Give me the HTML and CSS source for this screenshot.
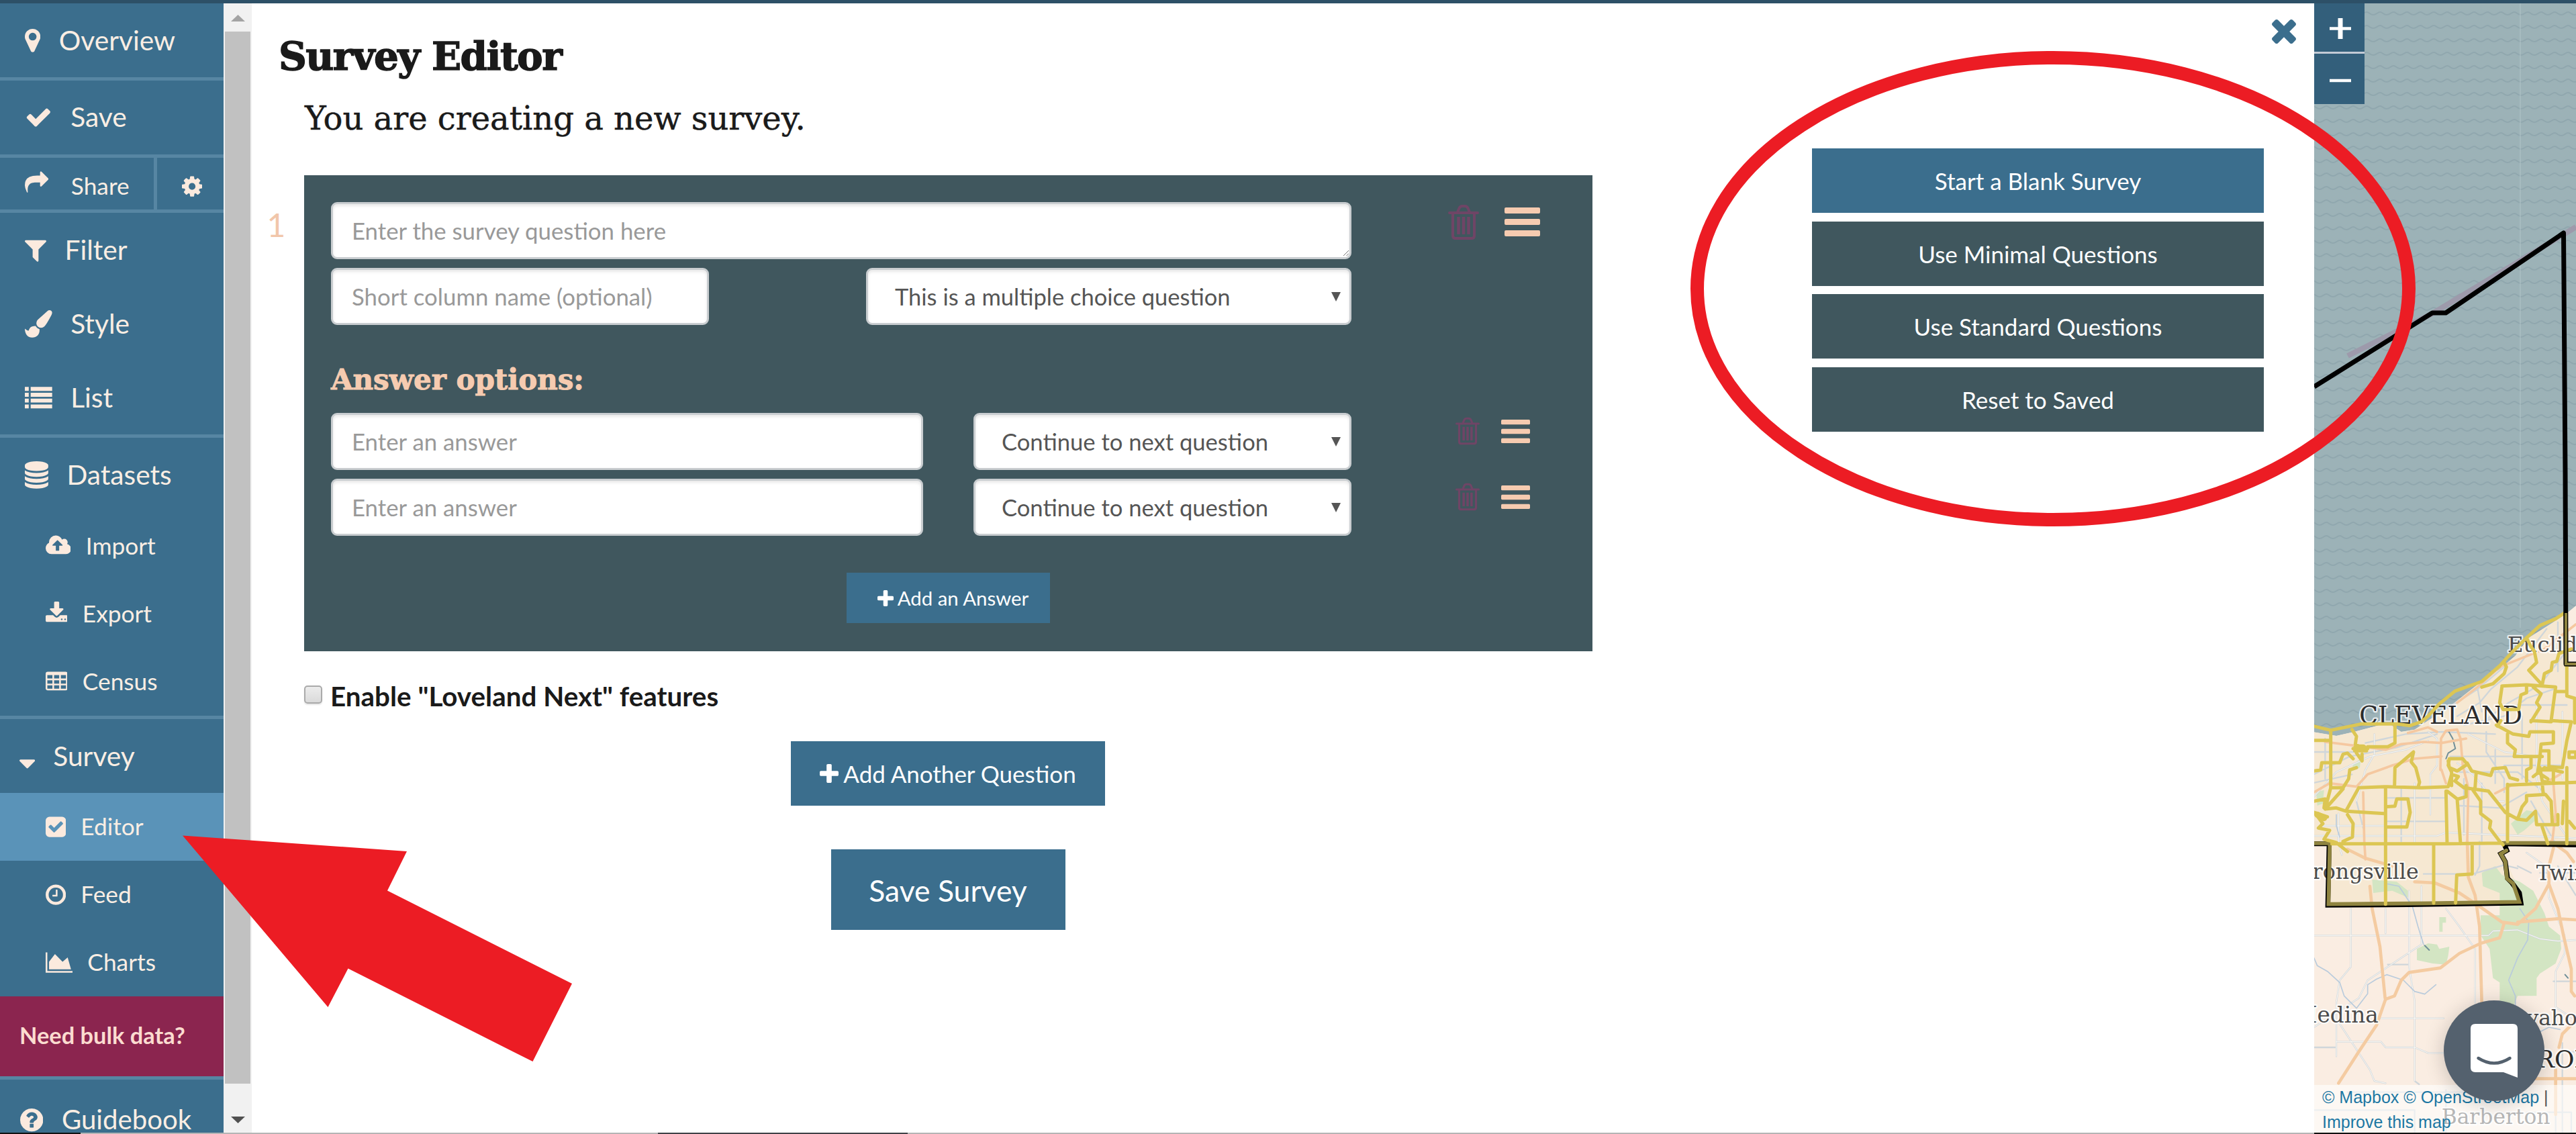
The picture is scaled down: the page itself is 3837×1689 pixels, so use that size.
FILE: index.html
```html
<!DOCTYPE html>
<html lang="en">
<head>
<meta charset="utf-8">
<title>Survey Editor</title>
<link rel="stylesheet" href="styles.css">
</head>
<body>
<svg class="defs" aria-hidden="true">
  <symbol id="i-trash" viewBox="0 0 46 52"><g fill="none" stroke="#6f4566" stroke-width="4"><path d="M2 12H44" stroke-linecap="round"/><path d="M14 11L16.500 5Q18 2 21 2H25Q28 2 29.500 5L32 11"/><path d="M7 12V46Q7 50 11 50H35Q39 50 39 46V12"/><path d="M15.500 18V44M23 18V44M30.500 18V44" stroke-width="4.500"/></g></symbol>
  <symbol id="i-bars" viewBox="0 0 53 43"><rect width="53" height="9" rx="2"/><rect y="17" width="53" height="9" rx="2"/><rect y="34" width="53" height="9" rx="2"/></symbol>
  <symbol id="i-plus" viewBox="192 128 1408 1408"><path d="M1600 736v192q0 40-28 68t-68 28h-416v416q0 40-28 68t-68 28h-192q-40 0-68-28t-28-68v-416h-416q-40 0-68-28t-28-68v-192q0-40 28-68t68-28h416v-416q0-40 28-68t68-28h192q40 0 68 28t28 68v416h416q40 0 68 28t28 68z"/></symbol>
  <symbol id="i-arrow" viewBox="0 0 14 14"><path d="M0 0h14L7 14z"/></symbol>
</svg>
<div class="app">
  <header class="topbar"></header>
  <nav class="sidebar">
    <a class="item"><svg viewBox="384 0 1024 1792"><path d="M1152 640q0-106-75-181t-181-75-181 75-75 181 75 181 181 75 181-75 75-181zm256 0q0 109-33 179l-364 774q-16 33-47.5 52t-67.5 19-67.5-19-46.5-52l-365-774q-33-70-33-179 0-212 150-362t362-150 362 150 150 362z"/></svg><span>Overview</span></a>
    <a class="item ruled save"><svg viewBox="0 0 1792 1792"><path d="M1671 566q0 40-28 68l-724 724-136 136q-28 28-68 28t-68-28l-136-136-362-362q-28-28-28-68t28-68l136-136q28-28 68-28t68 28l294 295 656-657q28-28 68-28t68 28l136 136q28 28 28 68z"/></svg><span>Save</span></a>
    <div class="share-row ruled">
      <a class="share"><svg viewBox="0 0 1792 1792"><path d="M1792 640q0 26-19 45l-512 512q-19 19-45 19t-45-19-19-45v-256h-224q-98 0-175.5 6t-154 21.5-133 42.5-105.5 69.5-80 101-48.5 138.5-17.5 181q0 55 5 123 0 6 2.5 23.5t2.5 26.5q0 15-8.5 25t-23.5 10q-16 0-28-17-7-9-13-22t-13.5-30-10.5-24q-127-285-127-451 0-199 53-333 162-403 875-403h224v-256q0-26 19-45t45-19 45 19l512 512q19 19 19 45z"/></svg><span>Share</span></a>
      <a class="gear"><svg viewBox="128 0 1536 1792"><path d="M1152 896q0-106-75-181t-181-75-181 75-75 181 75 181 181 75 181-75 75-181zm512-109v222q0 12-8 23t-20 13l-185 28q-19 54-39 91 35 50 107 138 10 12 10 25t-9 23q-27 37-99 108t-94 71q-12 0-26-9l-138-108q-44 23-91 38-16 136-29 186-7 28-36 28h-222q-14 0-24.5-8.5t-11.5-21.5l-28-184q-49-16-90-37l-141 107q-10 9-25 9-14 0-25-11-126-114-165-168-7-10-7-23 0-12 8-23 15-21 51-66.5t54-70.5q-27-50-41-99l-183-27q-13-2-21-12.5t-8-23.5v-222q0-12 8-23t19-13l186-28q14-46 39-92-40-57-107-138-10-12-10-24 0-10 9-23 26-36 98.5-107.5t94.5-71.5q13 0 26 10l138 107q44-23 91-38 16-136 29-186 7-28 36-28h222q14 0 24.5 8.5t11.5 21.5l28 184q49 16 90 37l142-107q9-9 24-9 13 0 25 10 129 119 165 170 7 8 7 22 0 12-8 23-15 21-51 66.5t-54 70.5q26 50 41 98l183 28q13 2 21 12.5t8 23.5z"/></svg></a>
    </div>
    <a class="item ruled filter"><svg viewBox="192 0 1408 1792"><path d="M1595 295q17 41-14 70l-493 493v742q0 42-39 59-13 5-25 5-27 0-45-19l-256-256q-19-19-19-45v-486l-493-493q-31-29-14-70 17-39 59-39h1280q42 0 59 39z"/></svg><span>Filter</span></a>
    <a class="item"><svg viewBox="0 0 1792 1792"><path d="M1615 0q70 0 122.5 46.5t52.5 116.5q0 63-45 151-332 629-465 752-97 91-218 91-126 0-216.5-92.5t-90.5-219.5q0-128 92-212l638-579q59-54 130-54zm-909 1034q39 76 106.5 130t150.5 76l1 71q4 213-129.5 347t-348.5 134q-123 0-218-46.5t-152.5-127.5-86.5-183-29-220q7 5 41 30t62 44.5 59 36.5 46 17q41 0 55-37 25-66 57.5-112.5t69.5-76 88-47.5 103-25.5 125-10.5z"/></svg><span>Style</span></a>
    <a class="item"><svg viewBox="0 0 1792 1792"><path d="M0 192h256v256H0zM384 192h1408v256H384zM0 576h256v256H0zM384 576h1408v256H384zM0 960h256v256H0zM384 960h1408v256H384zM0 1344h256v256H0zM384 1344h1408v256H384z"/></svg><span>List</span></a>
    <a class="item ruled"><svg viewBox="128 0 1536 1792"><path d="M896 768q237 0 443-43t325-127v170q0 69-103 128t-280 93.5-385 34.5-385-34.5-280-93.5-103-128v-170q119 84 325 127t443 43zm0 768q237 0 443-43t325-127v170q0 69-103 128t-280 93.5-385 34.5-385-34.5-280-93.5-103-128v-170q119 84 325 127t443 43zm0-384q237 0 443-43t325-127v170q0 69-103 128t-280 93.5-385 34.5-385-34.5-280-93.5-103-128v-170q119 84 325 127t443 43zm0-1152q208 0 385 34.5t280 93.5 103 128v128q0 69-103 128t-280 93.5-385 34.5-385-34.5-280-93.5-103-128v-128q0-69 103-128t280-93.5 385-34.5z"/></svg><span>Datasets</span></a>
    <a class="sub"><svg viewBox="0 0 1920 1792"><path d="M1280 864q0-14-9-23l-352-352q-9-9-23-9t-23 9l-351 351q-10 12-10 24 0 14 9 23t23 9h224v352q0 13 9.5 22.5t22.5 9.5h192q13 0 22.5-9.5t9.5-22.5v-352h224q13 0 22.5-9.5t9.5-22.5zm640 288q0 159-112.5 271.5t-271.5 112.5h-1088q-185 0-316.5-131.5t-131.5-316.5q0-130 70-240t188-165q-2-30-2-43 0-212 150-362t362-150q156 0 285.5 87t188.5 231q71-62 166-62 106 0 181 75t75 181q0 76-41 138 130 31 213.5 135.5t83.5 238.5z"/></svg><span>Import</span></a>
    <a class="sub"><svg viewBox="64 0 1664 1792"><path d="M1344 1344q0-26-19-45t-45-19-45 19-19 45 19 45 45 19 45-19 19-45zm256 0q0-26-19-45t-45-19-45 19-19 45 19 45 45 19 45-19 19-45zm128-224v320q0 40-28 68t-68 28h-1472q-40 0-68-28t-28-68v-320q0-40 28-68t68-28h465l135 136q58 56 136 56t136-56l136-136h464q40 0 68 28t28 68zm-325-569q17 41-14 70l-448 448q-18 19-45 19t-45-19l-448-448q-31-29-14-70 17-39 59-39h256v-448q0-26 19-45t45-19h256q26 0 45 19t19 45v448h256q42 0 59 39z"/></svg><span>Export</span></a>
    <a class="sub"><svg viewBox="0 0 1664 1792"><path fill-rule="evenodd" d="M160 128h1344q160 0 160 160v1088q0 160-160 160H160Q0 1536 0 1376V288Q0 128 160 128zM128 384v256h384V384zM640 384v256h384V384zM1152 384v256h384V384zM128 768v256h384V768zM640 768v256h384V768zM1152 768v256h384V768zM128 1152v256h384v-256zM640 1152v256h384v-256zM1152 1152v256h384v-256z"/></svg><span>Census</span></a>
    <a class="item ruled survey"><svg viewBox="384 0 1024 1792"><path d="M1408 1180q0 26-19 45l-448 448q-19 19-45 19t-45-19l-448-448q-19-19-19-45t19-45 45-19h896q26 0 45 19t19 45z"/></svg><span>Survey</span></a>
    <a class="sub active"><svg viewBox="128 0 1536 1792"><path d="M813 1299l614-614q19-19 19-45t-19-45l-102-102q-19-19-45-19t-45 19l-467 467-211-211q-19-19-45-19t-45 19l-102 102q-19 19-19 45t19 45l358 358q19 19 45 19t45-19zm851-883v960q0 119-84.5 203.5t-203.5 84.5h-960q-119 0-203.5-84.5t-84.5-203.5v-960q0-119 84.5-203.5t203.5-84.5h960q119 0 203.5 84.5t84.5 203.5z"/></svg><span>Editor</span></a>
    <a class="sub"><svg viewBox="128 0 1536 1792"><path d="M1024 544v448q0 14-9 23t-23 9h-320q-14 0-23-9t-9-23v-64q0-14 9-23t23-9h224v-352q0-14 9-23t23-9h64q14 0 23 9t9 23zm416 352q0-148-73-273t-198-198-273-73-273 73-198 198-73 273 73 273 198 198 273 73 273-73 198-198 73-273zm224 0q0 209-103 385.5t-279.5 279.5-385.5 103-385.5-103-279.5-279.5-103-385.5 103-385.5 279.5-279.5 385.5-103 385.5 103 279.5 279.5 103 385.5z"/></svg><span>Feed</span></a>
    <a class="sub"><svg viewBox="0 0 2048 1792"><path d="M2048 1536v128h-2048v-1536h128v1408h1920zm-384-1024l256 896h-1664v-576l448-576 576 576z"/></svg><span>Charts</span></a>
    <a class="bulk">Need bulk data?</a>
    <a class="item ruled guide"><svg viewBox="128 0 1536 1792"><path d="M1024 1376v-192q0-14-9-23t-23-9h-192q-14 0-23 9t-9 23v192q0 14 9 23t23 9h192q14 0 23-9t9-23zm256-672q0-88-55.5-163t-138.5-116-170-41q-243 0-371 213-15 24 8 42l132 100q7 6 19 6 16 0 25-12 53-68 86-92 34-24 86-24 48 0 85.5 26t37.5 59q0 38-20 61t-68 45q-63 28-115.5 86.5t-52.5 125.5v36q0 14 9 23t23 9h192q14 0 23-9t9-23q0-19 21.5-49.5t54.5-49.5q32-18 49-28.5t46-35 44.5-48 28-60.5 12.5-81zm384 192q0 209-103 385.5t-279.5 279.5-385.5 103-385.5-103-279.5-279.5-103-385.5 103-385.5 279.5-279.5 385.5-103 385.5 103 279.5 279.5 103 385.5z"/></svg><span>Guidebook</span></a>
  </nav>
  <div class="scrollbar">
    <svg class="sb-up" viewBox="0 0 21 10"><path d="M0 10h21L10.500 0z"/></svg>
    <div class="thumb"></div>
    <svg class="sb-down" viewBox="0 0 21 10"><path d="M0 0h21L10.500 10z"/></svg>
  </div>
  <main class="content">
    <section class="editor">
      <h1>Survey Editor</h1>
      <h2>You are creating a new survey.</h2>
      <div class="question">
        <div class="number">1</div>
        <div class="card">
          <div class="row">
            <div class="area-wrap">
              <textarea class="field area" placeholder="Enter the survey question here"></textarea>
              <svg class="grip" viewBox="0 0 8 8"><path d="M0 8L8 0M4.500 8L8 4.500"/></svg>
            </div>
            <svg class="trash big"><use href="#i-trash"/></svg>
            <svg class="bars big"><use href="#i-bars"/></svg>
          </div>
          <div class="row split">
            <input class="field short" placeholder="Short column name (optional)">
            <div class="field select kind"><span>This is a multiple choice question</span><svg><use href="#i-arrow"/></svg></div>
          </div>
          <h3>Answer options:</h3>
          <div class="row">
            <input class="field answer" placeholder="Enter an answer">
            <div class="field select next"><span>Continue to next question</span><svg><use href="#i-arrow"/></svg></div>
            <svg class="trash"><use href="#i-trash"/></svg>
            <svg class="bars"><use href="#i-bars"/></svg>
          </div>
          <div class="row">
            <input class="field answer" placeholder="Enter an answer">
            <div class="field select next"><span>Continue to next question</span><svg><use href="#i-arrow"/></svg></div>
            <svg class="trash"><use href="#i-trash"/></svg>
            <svg class="bars"><use href="#i-bars"/></svg>
          </div>
          <button class="btn add-answer"><svg><use href="#i-plus"/></svg>Add an Answer</button>
        </div>
      </div>
      <label class="enable"><span class="box"></span>Enable "Loveland Next" features</label>
      <div class="actions">
        <button class="btn add-question"><svg><use href="#i-plus"/></svg>Add Another Question</button>
        <button class="btn save-survey">Save Survey</button>
      </div>
    </section>
    <aside class="presets">
      <svg class="close" viewBox="302 302 1188 1188"><path d="M1490 1322q0 40-28 68l-136 136q-28 28-68 28t-68-28l-294-294-294 294q-28 28-68 28t-68-28l-136-136q-28-28-28-68t28-68l294-294-294-294q-28-28-28-68t28-68l136-136q28-28 68-28t68 28l294 294 294-294q28-28 68-28t68 28l136 136q28 28 28 68t-28 68l-294 294 294 294q28 28 28 68z" transform="translate(0 -64)"/></svg>
      <button class="btn preset">Start a Blank Survey</button>
      <button class="btn preset alt">Use Minimal Questions</button>
      <button class="btn preset alt">Use Standard Questions</button>
      <button class="btn preset alt">Reset to Saved</button>
    </aside>
  </main>
  <section class="map">
    <svg class="tiles" viewBox="0 0 390 1682">
      <defs>
        <pattern id="waves" width="20" height="20" patternUnits="userSpaceOnUse"><path d="M-2 13C2 13 3 17 8 17S14 13 18 13S23 17 28 17" fill="none" stroke="#90a7ae" stroke-width="2"/></pattern>
      </defs>
      <rect width="390" height="1682" fill="#9cb2b7"/>
      <rect width="390" height="1682" fill="url(#waves)"/>
      <path d="M307 0V930" stroke="#b1c4c8"/>
      <path d="M50 525L176 462L390 333" fill="none" stroke="#9d9aab" stroke-width="8"/>
      <g transform="translate(-17 855) scale(.33333)" fill="none" stroke-linecap="round" stroke-linejoin="round">
        <path fill="#faede2" d="M40 690L150 708L230 690L380 650L440 690L500 680L560 640L640 590L780 480L880 410L950 350L1010 270L1120 200L1180 160L1240 110V2490H40Z"/>
        <path fill="#f6e8d2" d="M40 690L150 708L230 690L380 650L440 690L500 680L560 640L640 590L780 480L880 410L950 350L1010 270L1120 200L1175 160V390H1240V1190H905L890 1220L950 1360L980 1450L115 1465L115 1190H40Z"/>
        <g fill="#d3e5c3">
          <path d="M310 1350L420 1360L470 1400L470 1430L400 1400L315 1410ZM610 1518h30v25h-15v40h-15ZM510 1660L560 1635L600 1640L610 1660L655 1650L650 1690L640 1730L580 1725L510 1710ZM800 1320L860 1290L890 1330L970 1360L1030 1400L1080 1500L1100 1560L1150 1600L1155 1660L1130 1725L1060 1770L1045 1790V1870H960L940 1920L880 1900V1810L850 1790L835 1660L795 1600V1510H880V1410L805 1380Z"/>
          <path d="M930 1100L1000 1040L1045 1050L1040 1085L990 1130L960 1150ZM60 960L95 950L90 1010L65 1020ZM230 830L260 810L255 850L210 870Z"/>
        </g>
        <g stroke="#cfd6da" stroke-width="7">
          <path d="M50 1155H600L640 1140L1220 1165M90 1110H370M370 1090H640M160 1055V1190L175 1240M320 700V790L280 860L240 1000L270 1120M560 690L600 720V840L570 880V1060M500 920V1190M690 830L760 880L860 1000H900M860 770V920M740 700L900 780L1040 800M660 800H1030M700 870H960L1080 960M900 840H1160M1045 570V900L1070 1000L1200 1190M1160 600V900M1120 500L1000 540L900 620L720 660M1170 340L1060 480L920 560L800 650M1140 200V420M1090 230L960 400L840 500L790 560L690 620M780 490L800 600M640 590L780 500L900 400M50 880L210 800L420 760L600 700M50 980L150 870L300 800L460 770L560 730M100 720V900M50 780H240M280 740L460 700L620 690L860 700M820 690V780L900 900V960M960 570H1180M980 620V900M40 920L220 880M440 940V1180M720 900V1150M800 920V1190M380 985H640M700 1020L880 1030L1000 960M1020 1000L1130 1190M215 1480V1740L165 1800L150 1900V2060L150 2140M50 1600H830L850 1580L960 1575L1060 1615L1140 1625L1220 1620M475 1400V1740L500 1890V2250L520 2265M370 1480V1590M530 1380V1640L380 1740L290 1800L250 1880L50 2010M640 1480L700 1560L770 1660V1900M540 1325H760L900 1285L960 1300M340 1970H630M150 2075H350L370 2100H500L560 2125H640M165 1995L300 2200L320 2250L370 2260M380 1730H475M50 2100H150M1000 1230L1070 1280L1100 1330V1430L1170 1600V1680L1130 1760V1920L1220 1980M1120 1805H1220M1060 1320H1220M1140 1290L1220 1420M790 1180V1290L770 1330M960 1290L1020 1320M50 2380H500V2490M200 2300H900M640 2290V2480M1000 2390H1200V2480M1130 2140V2480M1160 2080V2480M1180 2120H1220"/>
        </g>
        <path stroke="#fdfaf5" stroke-width="3" d="M50 1155H600L640 1140L1220 1165M90 1110H370M160 1055V1190L175 1240M320 700V790L280 860L240 1000M560 690L600 720V840L570 880V1060M500 920V1190M690 830L760 880L860 1000H900M740 700L900 780L1040 800M1045 570V900L1070 1000L1200 1190M1160 600V900M50 980L150 870L300 800L460 770L560 730M215 1480V1740L165 1800L150 1900V2140M50 1600H830L850 1580L960 1575L1060 1615L1140 1625L1220 1620M475 1400V1740L500 1890V2250M370 1480V1590M530 1380V1640L380 1740L290 1800L250 1880L50 2010M640 1480L700 1560L770 1660V1900M340 1970H630M150 2075H350L370 2100H500L560 2125H640M165 1995L300 2200L320 2250L370 2260M1000 1230L1070 1280L1100 1330V1430L1170 1600V1680L1130 1760V1920L1220 1980"/>
        <path stroke="#b9cbdc" stroke-width="5" d="M50 1700L65 1735L110 1760L165 1810L185 1870L240 1925L290 1860L290 1820L330 1795L375 1775L450 1800L500 1850L545 1862L595 1820M380 1370L430 1380L490 1470L515 1560L540 1640M970 1480L1010 1540L1005 1620L960 1700L920 1800L950 1870V1930M1060 2030L1100 2010L1150 2020M150 1060V1110L165 1160"/>
        <path stroke="#718f98" stroke-width="6" d="M635 690L650 685L670 720L682 765L650 785L640 810M545 1645L565 1665M1172 1775L1185 1790"/>
        <g stroke="#f4cba1" stroke-width="14">
          <path d="M200 1215L280 1255L400 1290M500 1360L590 1365L700 1410L790 1470L890 1540L960 1550L1040 1480L1100 1370L1100 1290L1120 1210M900 1545L880 1610L795 1635L700 1680L615 1745L475 1765L440 1800L410 1870L370 1885L330 2000L250 2120L160 2260M300 1380L310 1480L345 1650L368 1880M735 1180L740 1340L770 1420L790 1560L800 1900M960 1540L1140 1525L1220 1530M1100 1370L1140 1480L1165 1600L1200 1750V1850L1215 1870M1220 1980L1160 2040L1145 2100M1040 2240H1220M1130 2200V2400M1110 1180L1180 1230L1210 1270"/>
          <path stroke="#f5c8a0" stroke-width="11" d="M50 960L120 920L240 935L290 880L400 840L500 810L620 800M100 735L300 760L370 770L440 745L540 735L620 740L730 720M620 860L640 920M615 860L618 720L640 685L690 680L705 720L715 840L740 940L735 1180M470 695L560 670L600 690M690 560L780 490L880 400L1080 320L1220 210M860 965L930 930L1080 920L1150 880M1120 920L1130 1050L1115 1180M270 960L275 1180L280 1260"/>
        </g>
        <g font-family="'DejaVu Serif', serif" fill="#4a4a4a" stroke="#fff" stroke-opacity=".75" stroke-width="14" paint-order="stroke">
          <text x="915" y="332" font-size="97">Euclid</text>
          <text x="253" y="655" font-size="109" fill="#2b2b2b">CLEVELAND</text>
          <text x="518" y="1348" font-size="95" text-anchor="end">Strongsville</text>
          <text x="1043" y="1353" font-size="94">Twinsburg</text>
          <text x="338" y="1988" font-size="98" text-anchor="end">Medina</text>
          <text x="868" y="2000" font-size="94">Cuyahoga Falls</text>
          <text x="885" y="2190" font-size="108" fill="#2b2b2b">AKRON</text>
          <text x="620" y="2442" font-size="94">Barberton</text>
        </g>
        <g stroke="#000" stroke-width="22" stroke-linejoin="miter">
          <path d="M50 1190H118L112 1464L470 1462L975 1455L968 1410L935 1365L915 1345L905 1270L885 1235L912 1220L900 1190L1240 1195"/>
        </g>
        <path stroke="#8f8440" stroke-width="17" stroke-linejoin="miter" d="M50 1188H121L115 1460L560 1456L968 1450L940 1368L912 1345L905 1270L885 1235L910 1220M1177 160V390H1230M900 1187H1240"/>
        <g stroke="#dcc653" stroke-width="15">
          <path d="M50 665L125 683L260 655L420 655L480 662L530 645L560 620L610 565L680 508L800 465L880 395L930 340L1000 270L1060 215L1130 185L1175 155"/>
          <path d="M125 683V940M50 728H125M50 865L80 860L85 828H165L180 790L200 785L225 810M220 680L240 710L235 745L260 760M225 765H290M232 775H285M240 785L265 820V790M290 757H380L412 740V655M240 850L210 860L205 900L180 940H125L100 1035L150 1030L195 1045L365 1055M100 1035L180 945M195 1040L250 940L365 935L530 940L650 935L665 880L695 890L680 910L720 940L830 955L905 1050L960 1080L1000 1085L1040 1045L1045 1105H1140V1060M410 935L412 850L495 780L485 825L505 850L522 915L515 938M370 938V1460M370 1025L412 1022L420 990H470L480 1050L465 1115H370M640 955L645 1190M645 955L690 990L705 1190M695 990L730 980V930M760 950L795 1000V1055L840 1090L835 1120L880 1180L895 1195M50 1000L100 990L95 1030M50 1050L110 1070M60 1060L90 1100L70 1120L120 1130L95 1170L150 1185L200 1225M200 1060L225 1100L222 1160L180 1180M130 1190H640L890 1187M585 1190V1455M757 1190V1325L688 1330L683 1455M915 925V1180M915 928L1240 915M650 820L655 850L690 865L735 835L715 810H655L650 840L665 870V930M735 830L755 865L840 885L850 855L905 850L925 895L960 905M775 870L770 940M915 700V740L950 770L945 800L1070 800M865 660L940 700L1010 710L1015 690L1120 690V740L1065 745L1060 800L1050 870L1095 900M890 490L880 560L895 590H940L965 590L975 525L1000 515V490M890 485L1000 480L1130 490L1110 640L1200 645L1180 730L1160 850L1100 845V775H1070M1020 645L1060 580L1045 560L1065 520L1030 490M1020 810V850L1000 860V910M1030 890L1080 850L1160 870M1060 850L1070 910L1120 920V860L1060 860M1180 850V1190M1190 780H1220V805H1190ZM1070 480L1080 430L1110 415L1115 380L1135 375L1145 340L1200 320M1180 390V530L1215 540V650M1130 510H1180M1065 475L1010 415L1045 380L1035 330L1020 310L1000 270M800 490L850 475L900 430L910 400L900 380M885 640L870 665M1020 640L1110 645M960 1080L980 1025L1000 1000V975L1085 970L1110 1000L1115 1100M1070 920L1075 970M1160 1100L1165 1000M1070 1115L1095 1190M1190 1090L1215 1120"/>
          <path stroke-width="28" d="M65 1060L95 1075M240 760H270"/>
        </g>
      </g>
      <path d="M0 571L176 461H196L371.500 342L374 700L375 984H390" fill="none" stroke="#000" stroke-width="7" stroke-linejoin="round"/>
      <path d="M375 908V984H390" fill="none" stroke="#8f8440" stroke-width="4"/>
    </svg>
    <div class="zoom">
      <button><svg viewBox="0 0 32 32"><path d="M0 15.500H32" stroke-width="4.500"/><path d="M16 0V31" stroke-width="7"/></svg></button>
      <button><svg viewBox="0 0 32 32"><path d="M0 16H32" stroke-width="4.500"/></svg></button>
    </div>
    <div class="attribution"><a>© Mapbox</a> <a>© OpenStreetMap</a> |<br><a>Improve this map</a></div>
    <div class="chat"><svg viewBox="0 0 150 150"><path fill="#fff" d="M47 35H103Q110 35 110 42V115L89 107H47Q40 107 40 100V42Q40 35 47 35Z"/><path d="M51.500 86Q75 101 98.500 86" fill="none" stroke="#54616e" stroke-width="4.500" stroke-linecap="round"/></svg></div>
  </section>
  <footer class="taskbar"></footer>
  <svg class="marks" viewBox="0 0 3837 1689"><ellipse cx="3058" cy="430" rx="530" ry="344" fill="none" stroke="#ec1c24" stroke-width="20"/><path fill="#ec1c24" d="M272 1244.500L606 1268L577 1326.500L852 1465L793.500 1581L518.500 1442.500L488.500 1500Z"/></svg>
</div>
</body>
</html>
```
FILE: styles.css
```css
* { box-sizing: border-box; }

body {
  margin: 0;
  background: #fff;
  font-family: Lato, "Liberation Sans", sans-serif;
  color: #1a1a1a;
}

.defs { display: none; }

.app {
  position: relative;
  display: grid;
  grid-template: 5px 1682px 2px / 333px 42px 3072px 390px;
  width: 3837px;
  height: 1689px;
  overflow: hidden;
}

.topbar { grid-column: 1 / -1; background: #2d5067; }

.taskbar {
  grid-column: 1 / -1;
  background: linear-gradient(90deg, #111 120px, #b5b5b5 120px 980px, #3f4247 980px 1352px, #b5b5b5 1352px 3447px, #111 3447px);
}

/* sidebar */
.sidebar {
  display: flex;
  flex-direction: column;
  overflow: hidden;
  background: #3b6e8d;
  color: #faeee4;
}

.sidebar svg {
  height: 1em;
  vertical-align: -.143em;
  fill: #fbeade;
}

.item {
  flex: none;
  height: 110px;
  padding: 30px 0 0 37px;
  font-size: 40.7px;
  line-height: 50px;
}

.item svg { margin-right: 27.5px; }
.ruled { border-top: 5px solid #5786a3; }
.item.ruled { height: 115px; }
.item.save { padding-top: 29px; }

.share-row {
  flex: none;
  display: flex;
  height: 82px;
  font-size: 35.3px;
  line-height: 50px;
}

.share { width: 229px; padding: 17px 0 0 37px; }
.share svg { margin-right: 33.5px; vertical-align: .02em; }
.gear { flex: 1; border-left: 5px solid #5786a3; padding: 17px 0 0 37px; }

.sub {
  flex: none;
  height: 101.2px;
  padding: 25.5px 0 0 67.5px;
  font-size: 35.3px;
  line-height: 50px;
}

.sub svg { margin-right: 22.5px; }
.survey { padding-left: 28.500px; }
.active { background: #5a93b8; }

.bulk {
  flex: none;
  height: 119px;
  padding: 33px 0 0 29px;
  background: #8b254f;
  color: #fbdcd0;
  font-size: 34.4px;
  font-weight: 700;
  line-height: 50px;
}

.guide { padding: 34px 0 0 30px; font-size: 40.2px; }

/* scrollbar */
.scrollbar {
  display: flex;
  flex-direction: column;
  align-items: center;
  background: #f1f1f1;
}

.sb-up { width: 21px; height: 10px; margin: 16.5px 0 15.5px; fill: #a3a3a3; flex: none; }
.thumb { width: 38px; height: 1567px; background: #c1c1c1; flex: none; }
.sb-down { width: 21px; height: 10px; margin-top: 49px; fill: #505050; flex: none; }

/* editor */
.content { display: flex; background: #fff; }
.editor { width: 1997px; }

h1, h2, h3 { margin: 0; font-family: "DejaVu Serif", serif; }

h1 {
  height: 119px;
  padding: 39px 0 0 40px;
  font-size: 58px;
  line-height: 80px;
  letter-spacing: -1.6px;
  white-space: nowrap;
  -webkit-text-stroke: 1.4px #1a1a1a;
}

h2 {
  height: 137px;
  padding: 22px 0 0 79px;
  font-size: 48px;
  font-weight: 400;
  line-height: 60px;
  -webkit-text-stroke: .5px #1a1a1a;
}

h3 {
  height: 131px;
  padding-top: 56.5px;
  color: #f6cbb0;
  font-size: 42px;
  line-height: 50px;
  -webkit-text-stroke: 1px #f6cbb0;
}

.question { display: flex; }

.number {
  width: 78px;
  padding: 49px 0 0 22.5px;
  color: #f1c6aa;
  font-size: 48px;
  line-height: 50px;
}

.card {
  display: flex;
  flex-direction: column;
  width: 1919px;
  height: 709px;
  padding: 40px 0 0 40px;
  background: #40575e;
}

.row { display: flex; align-items: flex-start; }
.split { width: 1520px; justify-content: space-between; }
.row + .row { margin-top: 13px; }

.field {
  height: 85px;
  border: 3px solid #c9cdd0;
  border-radius: 9px;
  background: #fff;
  box-shadow: inset 0 3px 4px rgba(0, 0, 0, .09);
  padding: 0 28px;
  color: #555;
  font: 400 34.8px/79px Lato, "Liberation Sans", sans-serif;
  outline: 0;
}

.field::placeholder { color: #999; opacity: 1; }
.area-wrap { position: relative; width: 1520px; height: 85px; }
.area { display: block; width: 1520px; resize: none; overflow: hidden; }
.grip { position: absolute; right: 4px; bottom: 5px; width: 8px; height: 8px; stroke: #777; }
.short { width: 563px; }
.answer { width: 882px; }

.select {
  display: flex;
  align-items: center;
  justify-content: space-between;
  padding: 0 13px 0 40px;
}

.select svg { width: 14px; height: 14px; fill: #555; }
.kind { width: 723px; font-size: 34.5px; }
.next { width: 563px; margin-left: 75px; padding-left: 39px; font-size: 34.6px; }

.trash { width: 36px; height: 42px; margin: 6px 0 0 154.5px; }
.trash.big { width: 46px; height: 52px; margin: 4px 0 0 144px; }
.bars { width: 43px; height: 35px; margin: 10px 0 0 32.500px; fill: #f6cbb0; }
.bars.big { width: 53px; height: 43px; margin: 8px 0 0 38px; }

.btn {
  display: flex;
  align-items: center;
  justify-content: center;
  padding: 0;
  border: 0;
  background: #3b6e8d;
  color: #fff;
  font: 400 35px Lato, "Liberation Sans", sans-serif;
}

.btn svg { fill: #fff; }

.add-answer {
  width: 303px;
  height: 75px;
  margin: 55px 0 0 768px;
  padding-left: 14px;
  font-size: 29.4px;
}

.add-answer svg { width: 24px; height: 24px; margin-right: 6px; }

.enable {
  display: flex;
  align-items: center;
  height: 132px;
  margin-bottom: 2px;
  padding-left: 78px;
  font-size: 40.4px;
  font-weight: 700;
}

.box {
  width: 27px;
  height: 27px;
  margin: -4px 12px 0 0;
  border: 2px solid #aaa;
  border-radius: 5px;
  background: linear-gradient(#ececec, #dadada);
  box-shadow: 0 2px 2px rgba(0, 0, 0, .1);
}

.actions {
  display: flex;
  flex-direction: column;
  align-items: center;
  gap: 65px;
  padding-left: 77px;
}

.add-question { width: 468px; height: 96px; }
.add-question svg { width: 28px; height: 28px; margin-right: 7px; }
.save-survey { width: 349px; height: 120px; font-size: 44.5px; }

.presets {
  flex: 1;
  display: flex;
  flex-direction: column;
  align-items: stretch;
  gap: 12.700px;
  padding: 24px 75px 0 327px;
}

.close {
  align-self: flex-end;
  width: 36px;
  height: 36px;
  margin: 0 -47.5px 143.3px 0;
  overflow: visible;
  fill: #3b6e8d;
}

.preset { height: 96px; }
.alt { background: #40575e; }

/* map */
.map { position: relative; overflow: hidden; }
.tiles { display: block; width: 390px; height: 1682px; }

.zoom {
  position: absolute;
  top: 0;
  left: 0;
  display: flex;
  flex-direction: column;
  gap: 3px;
  width: 75px;
  background: #c3cad6;
}

.zoom button {
  height: 72px;
  padding: 4px 0 0 3px;
  border: 0;
  background: #335f7b;
}

.zoom button + button { height: 75px; }
.zoom svg { display: block; width: 32px; height: 32px; margin: 0 auto; stroke: #fff; }

.attribution {
  position: absolute;
  left: 0;
  right: 0;
  bottom: 0;
  height: 71px;
  padding-left: 12px;
  background: rgba(255, 255, 255, .6);
  color: #555;
  font: 25px/37px "Liberation Sans", sans-serif;
}

.attribution a { color: #1c77a3; }

.chat {
  position: absolute;
  left: 193px;
  top: 1485px;
  width: 150px;
  height: 150px;
  border-radius: 50%;
  background: #54616e;
  box-shadow: 0 4px 30px rgba(0, 0, 0, .2);
}

/* callouts drawn over the page */
.marks {
  position: absolute;
  inset: 0;
  width: 3837px;
  height: 1689px;
  pointer-events: none;
}
```
